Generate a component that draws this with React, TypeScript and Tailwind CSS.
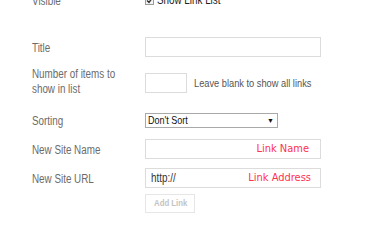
import React from "react";

const col = "w-[113px] shrink-0";
const sq = "inline-block origin-left scale-x-[0.82] whitespace-nowrap";
const lbl = `${sq} text-[12px] leading-[15px] text-[#6b6b6b]`;
const redFont = { fontFamily: "'DejaVu Sans Condensed', Tahoma, 'DejaVu Sans', sans-serif" };

export default function App() {
  return (
    <div
      className="w-[390px] h-[220px] overflow-hidden bg-white"
      style={{ fontFamily: "'Liberation Sans', Arial, sans-serif" }}
    >
      <div className="-mt-[8px] pl-[32px] flex flex-col">
        {/* Visible */}
        <div className="flex items-center h-[16px]">
          <div className={col}>
            <span className={lbl}>Visible</span>
          </div>
          <div className="flex items-center gap-[3px]">
            <span className="w-[9px] h-[9px] border border-[#9a9a9a] bg-[#f4f4f4] flex items-center justify-center">
              <svg width="7" height="7" viewBox="0 0 7 7">
                <path d="M1 3.5 L3 5.5 L6 1.2" stroke="#333" strokeWidth="1.4" fill="none" />
              </svg>
            </span>
            <span className={`${sq} text-[12px] text-[#222]`}>Show Link List</span>
          </div>
        </div>
        {/* Title */}
        <div className="flex items-center h-[20px] mt-[29px]">
          <div className={col}>
            <span className={lbl}>Title</span>
          </div>
          <div className="w-[176px] h-[20px] border border-[#dcdcdc] bg-white" />
        </div>
        {/* Number */}
        <div className="flex items-center h-[30px] mt-[11px]">
          <div className={col}>
            <span className={lbl}>
              Number of items to
              <br />
              show in list
            </span>
          </div>
          <div className="w-[42px] h-[20px] border border-[#dcdcdc] bg-white" />
          <span className={`ml-[7px] ${sq} text-[11.3px] text-[#555]`}>Leave blank to show all links</span>
        </div>
        {/* Sorting */}
        <div className="flex items-center h-[14px] mt-[15px]">
          <div className={col}>
            <span className={lbl}>Sorting</span>
          </div>
          <div className="w-[133px] h-[15px] border border-[#a9a9a9] bg-white flex items-center justify-between pl-[2px] pr-[3px]">
            <span className={`${sq} text-[11px] text-[#111] leading-none`}>Don't Sort</span>
            <span className="text-[7px] text-[#111] leading-none">▼</span>
          </div>
        </div>
        {/* New Site Name */}
        <div className="flex items-center h-[20px] mt-[12px]">
          <div className={col}>
            <span className={lbl}>New Site Name</span>
          </div>
          <div className="relative w-[176px] h-[20px] border border-[#dcdcdc] bg-white">
            <span className="absolute right-[11px] top-[2px] text-[11px] leading-[14px] text-[#ff3152]" style={redFont}>
              Link Name
            </span>
          </div>
        </div>
        {/* New Site URL */}
        <div className="flex items-center h-[20px] mt-[9px]">
          <div className={col}>
            <span className={lbl}>New Site URL</span>
          </div>
          <div className="relative w-[176px] h-[20px] border border-[#dcdcdc] bg-white flex items-center pl-[5px]">
            <span className={`${sq} text-[12px] text-[#333]`}>http://</span>
            <span className="absolute right-[9px] top-[2px] text-[11px] leading-[14px] text-[#ff3152]" style={redFont}>
              Link Address
            </span>
          </div>
        </div>
        {/* Add link */}
        <div className="flex mt-[6px]">
          <div className={col} />
          <div className="w-[50px] h-[19px] border border-[#e6e6e6] bg-white flex items-center pl-[8px]">
            <span className={`${sq} text-[9.5px] font-bold text-[#c4c4c4]`}>Add Link</span>
          </div>
        </div>
      </div>
    </div>
  );
}
